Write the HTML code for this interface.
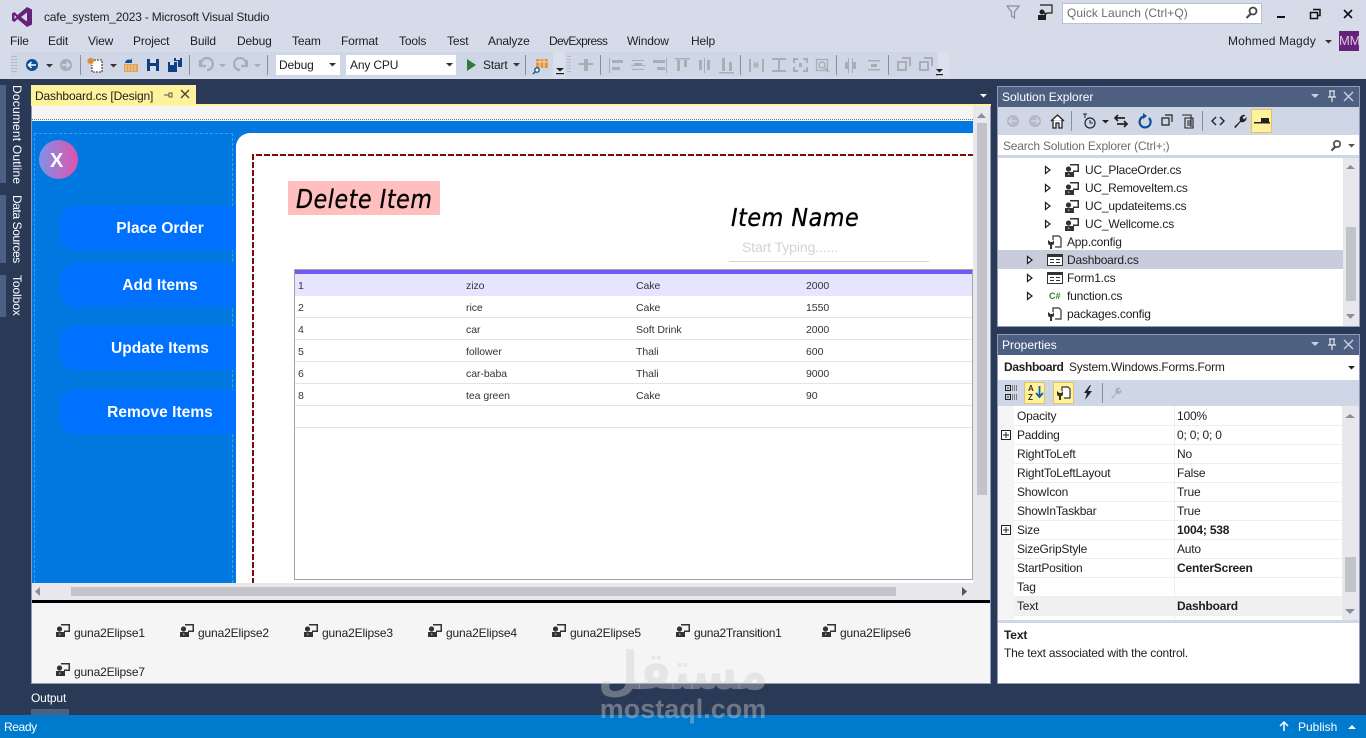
<!DOCTYPE html>
<html><head><meta charset="utf-8"><title>cafe_system_2023 - Microsoft Visual Studio</title>
<style>
html,body{margin:0;padding:0}
body{width:1366px;height:738px;position:relative;overflow:hidden;background:#2a3a56;font-family:"Liberation Sans",sans-serif;font-size:12px;color:#1e1e1e}
.b{position:absolute}
.t{position:absolute;white-space:nowrap;line-height:16px;letter-spacing:-.15px}
.m{top:33px}
.v{position:absolute;writing-mode:vertical-rl;color:#fff;left:10px;white-space:nowrap;line-height:14px;letter-spacing:-.1px}
.g{font-size:10.5px;color:#333;letter-spacing:-.05px}
.bt{position:absolute;left:60px;width:152px;padding-left:24px;height:44px;background:#0070ff;border-radius:14px 0 0 14px;color:#fff;font-weight:bold;font-size:15.5px;text-align:center;line-height:46px;letter-spacing:.05px}
.h{color:#fff;left:1002px;letter-spacing:0}
.p{letter-spacing:-.2px}
.c{font-style:italic;color:#000;font-family:'DejaVu Sans',sans-serif;transform-origin:left;-webkit-text-stroke:.35px #000}
svg{position:absolute;left:0;top:0}
</style></head><body>
<!-- chrome -->
<div class="b" style="left:0;top:0;width:1366px;height:79px;background:#d6dbe9"></div>
<div class="b" style="left:10px;top:52px;width:938px;height:25px;background:#cfd6e5"></div>
<div class="b" style="left:553px;top:52px;width:12px;height:25px;background:#dce0ec"></div>
<div class="b" style="left:938px;top:52px;width:11px;height:25px;background:#dce0ec"></div>
<div class="b" style="left:1062px;top:3px;width:198px;height:19px;background:#fff;border:1px solid #b8c0d4"></div>
<div class="b" style="left:1339px;top:31px;width:20px;height:20px;background:#68217a"></div>
<div class="t" style="left:1339px;top:33px;color:#d8c8e0;font-size:13px;width:20px;overflow:hidden">MM</div>
<div class="t" style="left:44px;top:9px;font-size:12px;letter-spacing:-.19px">cafe_system_2023 - Microsoft Visual Studio</div>
<div class="t m" style="left:10px">File</div><div class="t m" style="left:48px">Edit</div><div class="t m" style="left:88px">View</div><div class="t m" style="left:133px">Project</div><div class="t m" style="left:190px">Build</div><div class="t m" style="left:237px">Debug</div><div class="t m" style="left:292px">Team</div><div class="t m" style="left:341px">Format</div><div class="t m" style="left:399px">Tools</div><div class="t m" style="left:447px">Test</div><div class="t m" style="left:488px">Analyze</div><div class="t m" style="left:549px;letter-spacing:-.65px">DevExpress</div><div class="t m" style="left:627px">Window</div><div class="t m" style="left:691px">Help</div>
<div class="t" style="left:1067px;top:5px;color:#6d6d6d;letter-spacing:.05px">Quick Launch (Ctrl+Q)</div>
<div class="t" style="left:1228px;top:33px;letter-spacing:.15px">Mohmed Magdy</div>
<div class="b" style="left:276px;top:55px;width:64px;height:20px;background:#fff"></div>
<div class="b" style="left:346px;top:55px;width:110px;height:20px;background:#fff"></div>
<div class="t" style="left:279px;top:57px">Debug</div><div class="t" style="left:350px;top:57px">Any CPU</div><div class="t" style="left:483px;top:57px">Start</div>
<!-- left tabs -->
<div class="b" style="left:0;top:85px;width:6px;height:98px;background:#4d6082"></div>
<div class="b" style="left:0;top:195px;width:6px;height:68px;background:#4d6082"></div>
<div class="b" style="left:0;top:275px;width:6px;height:42px;background:#4d6082"></div>
<div class="v" style="top:85px;letter-spacing:.2px">Document Outline</div><div class="v" style="top:195px;letter-spacing:-.4px">Data Sources</div><div class="v" style="top:275px">Toolbox</div>
<!-- doc tab -->
<div class="b" style="left:31px;top:85px;width:165px;height:20px;background:#fff29d"></div>
<div class="t" style="left:35px;top:88px;letter-spacing:-.15px">Dashboard.cs [Design]</div>
<div class="b" style="left:31px;top:104px;width:960px;height:2px;background:#fff29d"></div>
<!-- designer -->
<div class="b" style="left:31px;top:106px;width:960px;height:578px;background:#f5f5f5;box-sizing:border-box;border:solid #8e9bbc;border-width:0 1px 1px 1px"></div>
<div class="b" style="left:32px;top:119px;width:941px;height:0;border-top:1px dotted #777"></div>
<div class="b" style="left:32px;top:121px;width:941px;height:462px;background:#0078e0"></div>
<div class="b" style="left:34px;top:133px;width:199px;height:450px;box-sizing:border-box;border:1px dashed #3f9df0;border-bottom:0"></div>
<div class="b" style="left:236px;top:133px;width:737px;height:450px;background:#fff;border-radius:14px 0 0 0"></div>
<div class="b" style="left:256px;top:154px;width:717px;height:2px;background:repeating-linear-gradient(90deg,#7d0a0a 0 6px,transparent 6px 8px)"></div>
<div class="b" style="left:252px;top:154px;width:2px;height:429px;background:repeating-linear-gradient(180deg,#7d0a0a 0 6px,transparent 6px 8px)"></div>
<div class="b" style="left:39px;top:140px;width:39px;height:39px;border-radius:50%;background:linear-gradient(90deg,#7f92e8,#e052ad)"></div>
<div class="t" style="left:50px;top:151px;color:#fff;font-weight:bold;font-size:20px;line-height:20px">X</div>
<div class="bt" style="top:206px">Place Order</div>
<div class="bt" style="top:263px">Add Items</div>
<div class="bt" style="top:326px">Update Items</div>
<div class="bt" style="top:390px">Remove Items</div>
<div class="b" style="left:288px;top:181px;width:152px;height:34px;background:#ffbfbf"></div>
<div class="t c" style="left:296px;top:185px;font-size:26px;line-height:30px;letter-spacing:.7px;transform:scaleX(.85)">Delete Item</div>
<div class="t c" style="left:731px;top:203px;font-size:25px;line-height:30px;letter-spacing:.6px;transform:scaleX(.89)">Item Name</div>
<div class="t" style="left:742px;top:239px;font-size:14px;color:#cfd4da;letter-spacing:-.1px">Start Typing......</div>
<div class="b" style="left:729px;top:261px;width:200px;height:1px;background:#d2d4dc"></div>
<!-- grid -->
<div class="b" style="left:294px;top:269px;width:679px;height:311px;box-sizing:border-box;background:#fff;border:1px solid #a3a3a3"></div>
<div class="b" style="left:295px;top:270px;width:677px;height:4px;background:#6c5cf5"></div>
<div class="b" style="left:295px;top:274px;width:677px;height:22px;background:#e6e4ff"></div>
<div class="b" style="left:295px;top:317px;width:677px;height:1px;background:#e4e4f0"></div>
<div class="b" style="left:295px;top:339px;width:677px;height:1px;background:#e4e4f0"></div>
<div class="b" style="left:295px;top:361px;width:677px;height:1px;background:#e4e4f0"></div>
<div class="b" style="left:295px;top:383px;width:677px;height:1px;background:#e4e4f0"></div>
<div class="b" style="left:295px;top:405px;width:677px;height:1px;background:#e4e4f0"></div>
<div class="b" style="left:295px;top:427px;width:677px;height:1px;background:#e4e4f0"></div>
<div class="t g" style="left:298px;top:278px">1</div><div class="t g" style="left:466px;top:278px">zizo</div><div class="t g" style="left:636px;top:278px">Cake</div><div class="t g" style="left:806px;top:278px">2000</div>
<div class="t g" style="left:298px;top:300px">2</div><div class="t g" style="left:466px;top:300px">rice</div><div class="t g" style="left:636px;top:300px">Cake</div><div class="t g" style="left:806px;top:300px">1550</div>
<div class="t g" style="left:298px;top:322px">4</div><div class="t g" style="left:466px;top:322px">car</div><div class="t g" style="left:636px;top:322px">Soft Drink</div><div class="t g" style="left:806px;top:322px">2000</div>
<div class="t g" style="left:298px;top:344px">5</div><div class="t g" style="left:466px;top:344px">follower</div><div class="t g" style="left:636px;top:344px">Thali</div><div class="t g" style="left:806px;top:344px">600</div>
<div class="t g" style="left:298px;top:366px">6</div><div class="t g" style="left:466px;top:366px">car-baba</div><div class="t g" style="left:636px;top:366px">Thali</div><div class="t g" style="left:806px;top:366px">9000</div>
<div class="t g" style="left:298px;top:388px">8</div><div class="t g" style="left:466px;top:388px">tea green</div><div class="t g" style="left:636px;top:388px">Cake</div><div class="t g" style="left:806px;top:388px">90</div>
<!-- designer scrollbars -->
<div class="b" style="left:973px;top:106px;width:17px;height:477px;background:#e8e8ec"></div>
<div class="b" style="left:977px;top:123px;width:10px;height:372px;background:#c2c3c9"></div>
<div class="b" style="left:32px;top:583px;width:958px;height:17px;background:#e8e8ec"></div>
<div class="b" style="left:71px;top:587px;width:825px;height:9px;background:#c2c3c9"></div>
<div class="b" style="left:32px;top:600px;width:958px;height:3px;background:#000"></div>
<!-- tray -->
<div class="t" style="left:74px;top:625px">guna2Elipse1</div><div class="t" style="left:198px;top:625px">guna2Elipse2</div><div class="t" style="left:322px;top:625px">guna2Elipse3</div><div class="t" style="left:446px;top:625px">guna2Elipse4</div><div class="t" style="left:570px;top:625px">guna2Elipse5</div><div class="t" style="left:694px;top:625px;letter-spacing:-.3px">guna2Transition1</div><div class="t" style="left:840px;top:625px">guna2Elipse6</div><div class="t" style="left:74px;top:664px">guna2Elipse7</div>
<div class="t" style="left:31px;top:690px;color:#fff">Output</div>
<div class="b" style="left:31px;top:709px;width:38px;height:6px;background:#4d6082"></div>
<!-- solution explorer -->
<div class="b" style="left:997px;top:86px;width:363px;height:241px;box-sizing:border-box;background:#fff;border:1px solid #8e9bbc"></div>
<div class="b" style="left:998px;top:87px;width:361px;height:20px;background:#4d6082"></div>
<div class="b" style="left:998px;top:107px;width:361px;height:28px;background:#cfd6e5"></div>
<div class="b" style="left:998px;top:135px;width:361px;height:1px;background:#fff"></div>
<div class="b" style="left:998px;top:155px;width:361px;height:3px;background:#cfd6e5"></div>
<div class="t h" style="top:89px">Solution Explorer</div>
<div class="t" style="left:1003px;top:138px;color:#6d6d6d;letter-spacing:-.2px">Search Solution Explorer (Ctrl+;)</div>
<div class="b" style="left:1251px;top:109px;width:21px;height:24px;box-sizing:border-box;background:#fff29d;border:1px solid #e5c365"></div>
<div class="b" style="left:998px;top:250px;width:345px;height:19px;background:#c9ccdb"></div>
<div class="t p" style="left:1085px;top:162px">UC_PlaceOrder.cs</div><div class="t p" style="left:1085px;top:180px;letter-spacing:-.3px">UC_RemoveItem.cs</div><div class="t p" style="left:1085px;top:198px">UC_updateitems.cs</div><div class="t p" style="left:1085px;top:216px">UC_Wellcome.cs</div><div class="t p" style="left:1067px;top:234px">App.config</div><div class="t p" style="left:1067px;top:252px">Dashboard.cs</div><div class="t p" style="left:1067px;top:270px">Form1.cs</div><div class="t p" style="left:1067px;top:288px">function.cs</div><div class="t p" style="left:1067px;top:306px">packages.config</div>
<div class="b" style="left:1343px;top:158px;width:16px;height:168px;background:#e8e8ec"></div>
<div class="b" style="left:1346px;top:227px;width:10px;height:74px;background:#c2c3c9"></div>
<!-- properties -->
<div class="b" style="left:997px;top:334px;width:363px;height:350px;box-sizing:border-box;background:#fff;border:1px solid #8e9bbc"></div>
<div class="b" style="left:998px;top:335px;width:361px;height:20px;background:#4d6082"></div>
<div class="b" style="left:998px;top:380px;width:361px;height:26px;background:#cfd6e5"></div>
<div class="t h" style="top:337px">Properties</div>
<div class="t" style="left:1004px;top:359px;font-weight:bold;letter-spacing:-.35px">Dashboard</div><div class="t" style="left:1069px;top:359px;letter-spacing:-.2px">System.Windows.Forms.Form</div>
<div class="b" style="left:1024px;top:382px;width:21px;height:22px;box-sizing:border-box;background:#fff29d;border:1px solid #e5c365"></div>
<div class="b" style="left:1053px;top:382px;width:21px;height:22px;box-sizing:border-box;background:#fff29d;border:1px solid #e5c365"></div>
<div class="b" style="left:998px;top:406px;width:16px;height:214px;background:#f5f5f5"></div>
<div class="b" style="left:1014px;top:596px;width:328px;height:19px;background:#f0f0f0"></div>
<div class="b" style="left:1174px;top:406px;width:1px;height:214px;background:#eee"></div>
<div class="b" style="left:1342px;top:406px;width:17px;height:214px;background:#e8e8ec"></div>
<div class="b" style="left:1345px;top:557px;width:11px;height:35px;background:#c2c3c9"></div>
<div class="b" style="left:998px;top:620px;width:361px;height:3px;background:#cfd6e5"></div>
<div class="b" style="left:1014px;top:425px;width:328px;height:1px;background:#eee"></div><div class="b" style="left:1014px;top:444px;width:328px;height:1px;background:#eee"></div><div class="b" style="left:1014px;top:463px;width:328px;height:1px;background:#eee"></div><div class="b" style="left:1014px;top:482px;width:328px;height:1px;background:#eee"></div><div class="b" style="left:1014px;top:501px;width:328px;height:1px;background:#eee"></div><div class="b" style="left:1014px;top:520px;width:328px;height:1px;background:#eee"></div><div class="b" style="left:1014px;top:539px;width:328px;height:1px;background:#eee"></div><div class="b" style="left:1014px;top:558px;width:328px;height:1px;background:#eee"></div><div class="b" style="left:1014px;top:577px;width:328px;height:1px;background:#eee"></div><div class="b" style="left:1014px;top:596px;width:328px;height:1px;background:#eee"></div><div class="b" style="left:1014px;top:615px;width:328px;height:1px;background:#eee"></div>
<div class="t p" style="left:1017px;top:408px">Opacity</div><div class="t p" style="left:1177px;top:408px">100%</div>
<div class="t p" style="left:1017px;top:427px">Padding</div><div class="t p" style="left:1177px;top:427px">0; 0; 0; 0</div>
<div class="t p" style="left:1017px;top:446px">RightToLeft</div><div class="t p" style="left:1177px;top:446px">No</div>
<div class="t p" style="left:1017px;top:465px">RightToLeftLayout</div><div class="t p" style="left:1177px;top:465px">False</div>
<div class="t p" style="left:1017px;top:484px">ShowIcon</div><div class="t p" style="left:1177px;top:484px">True</div>
<div class="t p" style="left:1017px;top:503px">ShowInTaskbar</div><div class="t p" style="left:1177px;top:503px">True</div>
<div class="t p" style="left:1017px;top:522px">Size</div><div class="t p" style="left:1177px;top:522px;font-weight:bold">1004; 538</div>
<div class="t p" style="left:1017px;top:541px">SizeGripStyle</div><div class="t p" style="left:1177px;top:541px">Auto</div>
<div class="t p" style="left:1017px;top:560px">StartPosition</div><div class="t p" style="left:1177px;top:560px;font-weight:bold">CenterScreen</div>
<div class="t p" style="left:1017px;top:579px">Tag</div>
<div class="t p" style="left:1017px;top:598px">Text</div><div class="t p" style="left:1177px;top:598px;font-weight:bold">Dashboard</div>
<div class="t" style="left:1004px;top:627px;font-weight:bold">Text</div>
<div class="t p" style="left:1004px;top:645px">The text associated with the control.</div>
<!-- status -->
<div class="b" style="left:0;top:715px;width:1366px;height:23px;background:#007acc"></div>
<div class="t" style="left:4px;top:719px;color:#fff;letter-spacing:-.4px">Ready</div><div class="t" style="left:1298px;top:719px;color:#fff;letter-spacing:0">Publish</div>
<!-- icons -->
<svg width="1366" height="738" viewBox="0 0 1366 738">
<defs>
<g id="uc"><path d="M5 0h9v8h-6v-1.500h4.500v-5h-7.500zM0 8h9v5H0z" fill="#333"/><circle cx="3.500" cy="5" r="2.600" fill="#333"/><path d="M3.500 9v2.500l1-1z" fill="#fff"/></g>
<g id="tri"><path d="M1.500 2.500l4.500 3.500-4.500 3.500z" fill="#fff" stroke="#1e1e1e" stroke-width="1.200"/></g>
<g id="cfg"><path d="M6 5V1h6l2 2v9H8" fill="#fff" stroke="#333" stroke-width="1.200"/><path d="M1 5v3a2 2 0 0 0 2 2v4h2v-4a2 2 0 0 0 2-2V5L5.500 7h-2z" fill="#333"/></g>
<g id="frm"><path d="M.5.500h15v11H.500z" fill="#fff" stroke="#333"/><path d="M1 1h14v2H1zM3 5h4v1H3zM3 8h4v1H3zM9 5h4v1H9zM9 8h4v1H9z" fill="#333"/></g>
<path id="dd" d="M0 0h7l-3.500 3.500z"/>
</defs>
<path fill="#68217a" fill-rule="evenodd" d="M27 7l5 2.500v15L27 27l-9.500-8-3 3-2.500-1.500v-7l2.500-1.500 3 3zM27 12.500L21 17l6 4.500zM14.500 15v4l2-2z"/>
<path d="M1007 6h12l-4.500 6v6l-3-2v-4z" fill="none" stroke="#8a8f9c" stroke-width="1.200"/>
<path d="M1040 5h12v8h-5l-2 2v-2h-1" fill="none" stroke="#1e1e1e" stroke-width="1.200"/><circle cx="1042" cy="12" r="2.500" fill="#1e1e1e"/><path d="M1038 15h8v5h-8z" fill="#1e1e1e"/>
<circle cx="1253" cy="11" r="3.500" fill="none" stroke="#444" stroke-width="1.800"/><path d="M1250.500 14l-4 4" stroke="#444" stroke-width="2"/>
<path d="M1277 16h8v2h-8z" fill="#111"/>
<path d="M1313 9.500h7v6h-2M1310.500 12.500h7v6h-7z" fill="none" stroke="#111" stroke-width="1.500"/>
<path d="M1344 10l8 8M1352 10l-8 8" stroke="#111" stroke-width="1.600"/>
<use href="#dd" x="1325" y="40" fill="#333"/>
<path d="M12 56v18M14 56v18M16 56v18M568 56v18M570 56v18" stroke="#9aa2b4" stroke-width="1" stroke-dasharray="1 2"/>
<circle cx="32" cy="65" r="6" fill="#0e4f95"/><path d="M36 65h-7M31.500 62l-3 3 3 3" stroke="#fff" stroke-width="1.500" fill="none"/>
<use href="#dd" x="46" y="64" fill="#333"/>
<circle cx="66" cy="65" r="6" fill="#a8adb8"/><path d="M62 65h7M66.500 62l3 3-3 3" stroke="#d6dbe9" stroke-width="1.500" fill="none"/>
<path d="M80.500 55v20M189.500 55v20M267.500 55v20M525.500 55v20M600.500 55v20M740.500 55v20M836.500 55v20M888.500 55v20" stroke="#8a8f9c"/>
<path d="M94 60h8v12h-10v-7" fill="#fff" stroke="#333" stroke-width="1.100" stroke-dasharray="2 1"/><path d="M91 57l1 2 2-1-1 2 2 1-2 1 .500 2-2-1-1 2-1-2-2 1 1-2-2-1 2-1-1-2 2 1z" fill="#d98a2b"/>
<use href="#dd" x="110" y="64" fill="#333"/>
<path d="M124 64h14v8h-14z" fill="#e0a35c"/><path d="M125 66h12M125 68h12M125 70h12" stroke="#f3d3a6" stroke-dasharray="2 1"/><path d="M125 63a4 4 0 0 1 6-3l1-2v5h-4" fill="#0e4f95"/>
<path d="M147 59h12v12h-12z" fill="#0e3f82"/><path d="M150 59h6v4h-6zM150 66h6v5h-6z" fill="#d6dbe9"/>
<path d="M168 62h9v10h-9zM174 58h8v9h-4v-6h-4z" fill="#0e3f82"/><path d="M170 62h4v3h-4zM176 58h4v2h-4z" fill="#d6dbe9"/>
<path d="M200 60v6h6M201 65a6 6 0 1 1 6 5" fill="none" stroke="#a8adb8" stroke-width="2.200"/>
<path d="M247 60v6h-6M246 65a6 6 0 1 0-6 5" fill="none" stroke="#a8adb8" stroke-width="2.200"/>
<use href="#dd" x="219" y="64" fill="#a8adb8"/><use href="#dd" x="254" y="64" fill="#a8adb8"/>
<use href="#dd" x="329" y="63" fill="#333"/><use href="#dd" x="446" y="63" fill="#333"/>
<path d="M467 59l9 6-9 6z" fill="#2e7d32"/>
<use href="#dd" x="513" y="63" fill="#333"/>
<path d="M536 59h12v9h-12z" fill="#e0964a"/><path d="M536 62h12M540 59v9M544 59v9" stroke="#f5d9b8"/><circle cx="537" cy="70" r="2.200" fill="#fff" stroke="#0e4f95" stroke-width="1.300"/><path d="M535 72l-2 2" stroke="#0e4f95" stroke-width="1.500"/>
<path d="M556 68h8l-4 3.500zM556 73h8v1.200h-8z" fill="#222"/>
<path d="M936 69h7l-3.500 3.500zM936 74h7v1.200h-7z" fill="#222"/>
<g fill="#a8adb8">
<path d="M579 63h14v2h-14zM584 59h4v12h-4z"/>
<path d="M609 58h1v15h-1zM612 60h11v3h-11zM612 67h8v3h-8z"/>
<path d="M632 60h12v1h-12zM634 63h8v3h-8zM631 65h14v1h-14zM632 69h12v1h-12z"/>
<path d="M666 58h1v15h-1zM653 60h12v3h-12zM657 67h8v3h-8z"/>
<path d="M675 58h15v1.500h-15zM677 60h3v11h-3zM684 60h3v7h-3z"/>
<path d="M699 60h3v10h-3zM707 60h3v10h-3zM704 58h1v15h-1z"/>
<path d="M719 72h15v1.500h-15zM722 58h3v13h-3zM729 62h3v9h-3z"/>
<path d="M749 59h2v13h-2zM762 59h2v13h-2z"/>
<path d="M772 58h14v2h-14zM772 70h14v2h-14zM778 60h2v10h-2z"/>
<path d="M793 58h5v2h-3v3h-2zM808 58h-5v2h3v3h2zM793 72h5v-2h-3v-3h-2zM808 72h-5v-2h3v-3h2zM799 63h3v4h-3z"/>
<path d="M848 58h1v15h-1zM852 58h1v15h-1zM845 62h3v7h-3zM853 62h3v7h-3z"/>
<path d="M868 60h12v1.500h-12zM868 69h12v1.500h-12zM871 64h6v3h-6z"/>
</g>
<path d="M754 62l4 6M758 62l-4 6M753 65h6" stroke="#a8adb8" stroke-width="1.300"/>
<path d="M816.500 59.500h11v11h-11z" fill="none" stroke="#a8adb8" stroke-width="1.300"/><circle cx="822" cy="65" r="3" fill="none" stroke="#a8adb8" stroke-width="1.400"/><path d="M825 68l4 4" stroke="#a8adb8" stroke-width="2"/>
<path d="M898 62h8v8h-8zM902 58h8v8" fill="none" stroke="#a8adb8" stroke-width="2"/><path d="M920 62h8v8h-8zM924 58h8v8" fill="none" stroke="#a8adb8" stroke-width="2"/>
<!-- doc tab icons -->
<path d="M164 95h5M169 92.500v5M169 93h3v4h-3" fill="none" stroke="#555"/>
<path d="M181 90l8 8M189 90l-8 8" stroke="#444" stroke-width="1.400"/>
<use href="#dd" x="980" y="94" fill="#fff"/>
<!-- scrollbar arrows -->
<path d="M977 118l4.500-5 4.500 5z" fill="#8a8f9c"/><path d="M40 587v9l-5-4.500z" fill="#8a8f9c"/><path d="M962 587v9l5-4.500z" fill="#555"/>
<path d="M1346 169l4.500-4 4.500 4z" fill="#8a8f9c"/><path d="M1346 314l4.500 5 4.500-5z" fill="#8a8f9c"/>
<path d="M1345 418l5-4 5 4z" fill="#8a8f9c"/><path d="M1345 609l5 5 5-5z" fill="#8a8f9c"/>
<!-- panel header buttons -->
<g id="hdr"><path d="M1311 94h8l-4 4z" fill="#c8d0e0"/><path d="M1329 91h6M1330 91v6h4v-6M1328 97h8M1332 97v5" stroke="#fff" fill="none"/><path d="M1344 92l9 9M1353 92l-9 9" stroke="#c8d0e0" stroke-width="1.400"/></g>
<use href="#hdr" y="248"/>
<!-- SE toolbar -->
<circle cx="1013" cy="121" r="6" fill="#b4b9c4"/><path d="M1017 121h-7M1012 118l-3 3 3 3" stroke="#cfd6e5" fill="none" stroke-width="1.400"/>
<circle cx="1035" cy="121" r="6" fill="#b4b9c4"/><path d="M1031 121h7M1036 118l3 3-3 3" stroke="#cfd6e5" fill="none" stroke-width="1.400"/>
<path d="M1051 121l6.500-6 6.500 6M1053 120v8h3v-5h3v5h3v-8" fill="#fff" stroke="#222" stroke-width="1.300"/>
<path d="M1071.500 111v20M1202.500 111v20" stroke="#8a8f9c"/>
<circle cx="1090" cy="123" r="5" fill="none" stroke="#222" stroke-width="1.200"/><path d="M1090 120v3h3M1083 114h4M1085 114v4" stroke="#222" fill="none"/><use href="#dd" x="1102" y="120" fill="#222"/>
<path d="M1118 115l-3 3 3 3M1115 118h10M1124 121l3 3-3 3M1127 124h-10" fill="none" stroke="#222" stroke-width="1.700"/>
<path d="M1149 118a5.500 5.500 0 1 1-5-1.500" fill="none" stroke="#0e4f95" stroke-width="2.200"/><path d="M1143 113v6l4-3z" fill="#0e4f95"/>
<path d="M1162 118h7v7h-7zM1165 115h7v7" fill="none" stroke="#222" stroke-width="1.200"/>
<path d="M1182 115h7l2 0v12M1185 118h8v10h-8zM1187 121h4M1187 123h4M1187 125h4" fill="none" stroke="#222" stroke-width="1.100"/>
<path d="M1216 117l-4 4 4 4M1220 117l4 4-4 4" fill="none" stroke="#222" stroke-width="1.400"/>
<path d="M1234 127l6-6a4.500 4.500 0 0 1 5.500-6l-3 2.500 1.500 2 2.500-2.500a4.500 4.500 0 0 1-6 5l-5 6z" fill="#222"/>
<path d="M1254 122h16v1.500h-16zM1261 118h8v4h-8z" fill="#222"/>
<circle cx="1337" cy="144" r="3.200" fill="none" stroke="#444" stroke-width="1.600"/><path d="M1335 147l-3.500 3.500" stroke="#444" stroke-width="2"/><use href="#dd" x="1348" y="144" fill="#555"/>
<use href="#uc" x="1065" y="164"/><use href="#uc" x="1065" y="182"/><use href="#uc" x="1065" y="200"/><use href="#uc" x="1065" y="218"/>
<use href="#tri" x="1044" y="164"/><use href="#tri" x="1044" y="182"/><use href="#tri" x="1044" y="200"/><use href="#tri" x="1044" y="218"/>
<use href="#tri" x="1026" y="254"/><use href="#tri" x="1026" y="272"/><use href="#tri" x="1026" y="290"/>
<use href="#cfg" x="1047" y="235"/><use href="#cfg" x="1047" y="307"/>
<use href="#frm" x="1047" y="254"/><use href="#frm" x="1047" y="272"/>
<text x="1049" y="299" font-family="Liberation Sans" font-size="9" font-weight="bold" fill="#3a7d34">C#</text>
<use href="#dd" x="1348" y="366" fill="#222"/>
<!-- props toolbar -->
<path d="M1005.500 385.500h5v5h-5zM1005.500 394.500h5v5h-5z" fill="none" stroke="#222"/><path d="M1007 388h2M1007 397h2" stroke="#222"/><path d="M1012 386h6M1012 388h6M1012 390h6M1012 395h6M1012 397h6M1012 399h6" stroke="#222" stroke-dasharray="1 1"/>
<text x="1028" y="391" font-family="Liberation Sans" font-size="8" font-weight="bold" fill="#333">A</text><text x="1028" y="400" font-family="Liberation Sans" font-size="8" font-weight="bold" fill="#333">Z</text>
<path d="M1039.500 386v10M1036 393l3.500 4 3.500-4" stroke="#0e63b8" fill="none" stroke-width="1.800"/>
<use href="#cfg" x="1056" y="386"/>
<path d="M1090 385l-6 8h3l-2 7 7-9h-4l3-6z" fill="#222"/>
<path d="M1102.500 383v20" stroke="#8a8f9c"/>
<path d="M1111 398l5-5a3.500 3.500 0 0 1 4.500-5l-2.500 2 1 1.500 2.500-2a3.500 3.500 0 0 1-5 4l-4 5z" fill="#a8adb8"/>
<path d="M1001.500 430.500h9v9h-9zM1003 435h6M1006 432v6" fill="#fff" stroke="#222"/>
<path d="M1001.500 525.500h9v9h-9zM1003 530h6M1006 527v6" fill="#fff" stroke="#222"/>
<!-- tray icons -->
<use href="#uc" x="56" y="624"/><use href="#uc" x="180" y="624"/><use href="#uc" x="304" y="624"/><use href="#uc" x="428" y="624"/><use href="#uc" x="552" y="624"/><use href="#uc" x="676" y="624"/><use href="#uc" x="822" y="624"/><use href="#uc" x="56" y="663"/>
<!-- status -->
<path d="M1284 731v-9M1280 726l4-4 4 4" stroke="#fff" fill="none" stroke-width="1.500"/><path d="M1348 729l4-4 4 4z" fill="#fff"/>
<!-- watermark -->
<text transform="translate(683 689) scale(.704 .8)" text-anchor="middle" font-family="DejaVu Sans" font-size="66" font-weight="bold" fill="#cdcdcd" fill-opacity=".4">مستقل</text>
<text x="683" y="718" text-anchor="middle" font-family="Liberation Sans" font-size="27" font-weight="bold" fill="#cdcdcd" fill-opacity=".42">mostaql.com</text>
</svg>
</body></html>
